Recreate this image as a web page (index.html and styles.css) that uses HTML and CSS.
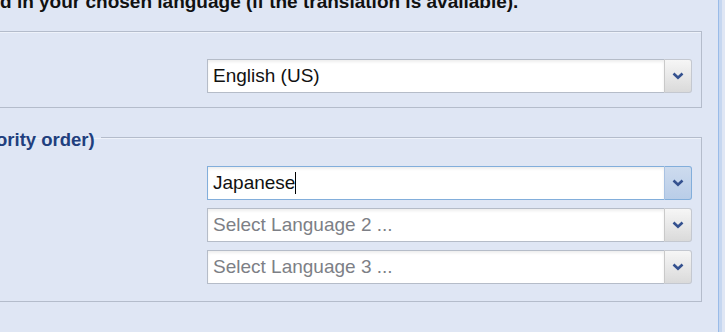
FILE: index.html
```html
<!DOCTYPE html>
<html lang="en">
<head>
<meta charset="utf-8">
<title>Language settings</title>
<link rel="stylesheet" href="styles.css">
</head>
<body>
<div class="page">
  <div class="main">
    <p class="intro">d in your chosen language (if the translation is available).</p>

    <fieldset class="group group-ui">
      <div class="row">
        <div class="combo">
          <div class="combo-input">English (US)</div>
          <div class="combo-trigger">
            <svg width="12" height="8" viewBox="0 0 12 8"><polyline points="1.5,1.5 6,5.8 10.5,1.5" fill="none" stroke="#34518f" stroke-width="2.6" stroke-linejoin="miter"/></svg>
          </div>
        </div>
      </div>
    </fieldset>

    <fieldset class="group group-content">
      <legend class="legend">ority order)</legend>
      <div class="row">
        <div class="combo combo-focus">
          <div class="combo-input">Japanese<span class="caret"></span></div>
          <div class="combo-trigger">
            <svg width="12" height="8" viewBox="0 0 12 8"><polyline points="1.5,1.5 6,5.8 10.5,1.5" fill="none" stroke="#34518f" stroke-width="2.6" stroke-linejoin="miter"/></svg>
          </div>
        </div>
      </div>
      <div class="row">
        <div class="combo">
          <div class="combo-input placeholder">Select Language 2 ...</div>
          <div class="combo-trigger">
            <svg width="12" height="8" viewBox="0 0 12 8"><polyline points="1.5,1.5 6,5.8 10.5,1.5" fill="none" stroke="#34518f" stroke-width="2.6" stroke-linejoin="miter"/></svg>
          </div>
        </div>
      </div>
      <div class="row">
        <div class="combo">
          <div class="combo-input placeholder">Select Language 3 ...</div>
          <div class="combo-trigger">
            <svg width="12" height="8" viewBox="0 0 12 8"><polyline points="1.5,1.5 6,5.8 10.5,1.5" fill="none" stroke="#34518f" stroke-width="2.6" stroke-linejoin="miter"/></svg>
          </div>
        </div>
      </div>
    </fieldset>
  </div>
  <div class="panel-edge"></div>
</div>
</body>
</html>
```
FILE: styles.css
```css
html, body {
  margin: 0;
  padding: 0;
}
body {
  background: #dfe6f4;
  font-family: "Liberation Sans", Arial, sans-serif;
  overflow: hidden;
  width: 725px;
  height: 332px;
}
.page {
  display: flex;
  align-items: stretch;
  height: 332px;
}
.main {
  width: 722px;
  margin-left: -20px;
  flex: none;
}
.intro {
  margin: -9px 0 0 20px;
  font-size: 19px;
  line-height: 21px;
  font-weight: bold;
  color: #111;
  white-space: nowrap;
}
.group {
  margin: 0;
  border: 1px solid #b4bccb;
  box-shadow: inset 1px 1px 0 #eef2fa;
  padding: 0 9px 14px 0;
  min-width: 0;
}
.group-ui {
  margin-top: 19px;
  padding-top: 27px;
}
.group-content {
  margin-top: 17px;
  padding-top: 16px;
  padding-bottom: 17px;
}
.legend {
  padding: 4px 6px 0 0;
  margin-left: 15px;
  font-size: 18.5px;
  line-height: 21px;
  font-weight: bold;
  color: #213f7e;
}
.row {
  display: flex;
  justify-content: flex-end;
}
.row + .row {
  margin-top: 8px;
}
.combo {
  display: flex;
  width: 485px;
  height: 34px;
  box-sizing: border-box;
}
.combo-input {
  flex: 1;
  display: flex;
  align-items: center;
  padding-left: 5px;
  background: #fff;
  border: 1px solid #b5bcc8;
  border-right: none;
  box-shadow: inset 0 2px 3px rgba(0, 0, 0, 0.07);
  font-size: 19px;
  color: #111;
  white-space: nowrap;
}
.placeholder {
  color: #7d7f86;
}
.caret {
  display: inline-block;
  width: 1px;
  height: 22px;
  background: #000;
}
.combo-trigger {
  width: 28px;
  box-sizing: border-box;
  display: flex;
  align-items: center;
  justify-content: center;
  background: linear-gradient(#f6f6f6, #dadada);
  border: 1px solid #c4c8d0;
  border-left-color: #c9c9c9;
  border-radius: 0 3px 3px 0;
}
.combo-focus .combo-input {
  border-color: #82aedb;
}
.combo-focus .combo-trigger {
  background: linear-gradient(#cddbee, #b9cde8);
  border-color: #82aedb;
  border-left-color: #a9c2e2;
}
.panel-edge {
  width: 4px;
  margin-left: 16px;
  flex: none;
  background: #c6d7f0;
  border-left: 1px solid #99bbe8;
  box-sizing: border-box;
}
```
